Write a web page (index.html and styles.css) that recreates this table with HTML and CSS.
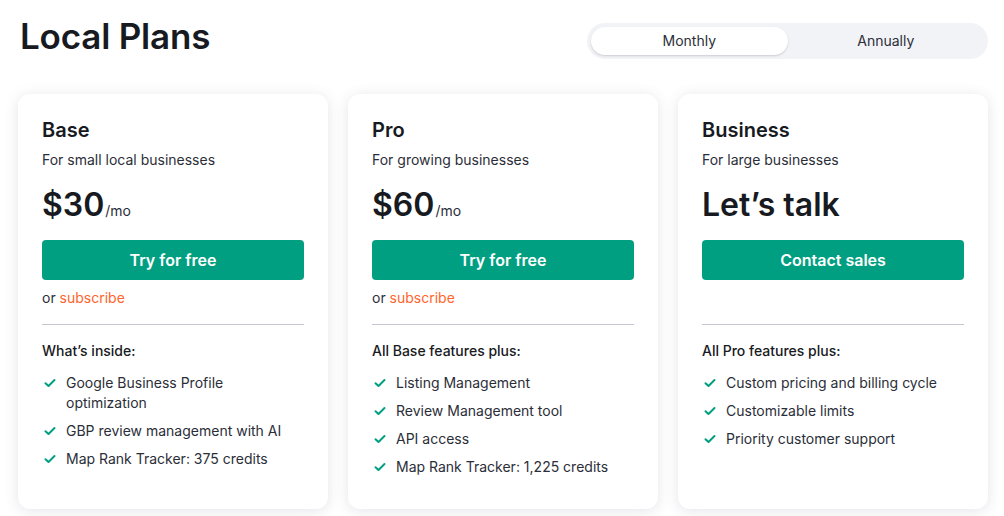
FILE: index.html
```html
<!DOCTYPE html>
<html lang="en">
<head>
<meta charset="utf-8">
<title>Local Plans</title>
<link rel="stylesheet" href="styles.css">
</head>
<body>
<div class="page">
  <header class="top">
    <h1 class="title">Local Plans</h1>
    <div class="toggle">
      <span class="toggle-opt active">Monthly</span>
      <span class="toggle-opt">Annually</span>
    </div>
  </header>
  <main class="cards">
    <section class="card">
      <h2 class="plan">Base</h2>
      <p class="desc">For small local businesses</p>
      <div class="price"><span class="amount">$30</span><span class="per">/mo</span></div>
      <a class="btn" href="#">Try for free</a>
      <p class="alt">or <a href="#" class="sub">subscribe</a></p>
      <hr class="sep">
      <p class="inc">What’s inside:</p>
      <ul class="feats">
        <li><svg class="chk" viewBox="0 0 12 10"><path d="M1.5 5.2 4.5 8 10.5 2" /></svg><span>Google Business Profile optimization</span></li>
        <li><svg class="chk" viewBox="0 0 12 10"><path d="M1.5 5.2 4.5 8 10.5 2" /></svg><span>GBP review management with AI</span></li>
        <li><svg class="chk" viewBox="0 0 12 10"><path d="M1.5 5.2 4.5 8 10.5 2" /></svg><span>Map Rank Tracker: 375 credits</span></li>
      </ul>
    </section>
    <section class="card">
      <h2 class="plan">Pro</h2>
      <p class="desc">For growing businesses</p>
      <div class="price"><span class="amount">$60</span><span class="per">/mo</span></div>
      <a class="btn" href="#">Try for free</a>
      <p class="alt">or <a href="#" class="sub">subscribe</a></p>
      <hr class="sep">
      <p class="inc">All Base features plus:</p>
      <ul class="feats">
        <li><svg class="chk" viewBox="0 0 12 10"><path d="M1.5 5.2 4.5 8 10.5 2" /></svg><span>Listing Management</span></li>
        <li><svg class="chk" viewBox="0 0 12 10"><path d="M1.5 5.2 4.5 8 10.5 2" /></svg><span>Review Management tool</span></li>
        <li><svg class="chk" viewBox="0 0 12 10"><path d="M1.5 5.2 4.5 8 10.5 2" /></svg><span>API access</span></li>
        <li><svg class="chk" viewBox="0 0 12 10"><path d="M1.5 5.2 4.5 8 10.5 2" /></svg><span>Map Rank Tracker: 1,225 credits</span></li>
      </ul>
    </section>
    <section class="card">
      <h2 class="plan">Business</h2>
      <p class="desc">For large businesses</p>
      <div class="price"><span class="amount">Let’s talk</span></div>
      <a class="btn" href="#">Contact sales</a>
      <p class="alt"></p>
      <hr class="sep">
      <p class="inc">All Pro features plus:</p>
      <ul class="feats">
        <li><svg class="chk" viewBox="0 0 12 10"><path d="M1.5 5.2 4.5 8 10.5 2" /></svg><span>Custom pricing and billing cycle</span></li>
        <li><svg class="chk" viewBox="0 0 12 10"><path d="M1.5 5.2 4.5 8 10.5 2" /></svg><span>Customizable limits</span></li>
        <li><svg class="chk" viewBox="0 0 12 10"><path d="M1.5 5.2 4.5 8 10.5 2" /></svg><span>Priority customer support</span></li>
      </ul>
    </section>
  </main>
</div>
</body>
</html>
```
FILE: styles.css
```css
* { box-sizing: border-box; }
html, body { margin: 0; padding: 0; background: #ffffff; }
body {
  font-family: Inter, "Noto Sans", "Liberation Sans", sans-serif;
  color: #191b23;
  width: 1004px;
  height: 516px;
  overflow: hidden;
}
.page { padding: 0 16px 0 18px; }
.top {
  display: flex;
  justify-content: space-between;
  align-items: flex-start;
  height: 94px;
}
.title {
  margin: 14px 0 0 2px;
  font-size: 35px;
  line-height: 44px;
  font-weight: 600;
  letter-spacing: -0.2px;
  color: #181a22;
}
.toggle {
  margin-top: 23px;
  width: 401px;
  height: 36px;
  border-radius: 18px;
  background: #f2f3f7;
  padding: 4px;
  display: flex;
}
.toggle-opt {
  flex: 1;
  display: flex;
  align-items: center;
  justify-content: center;
  font-size: 14px;
  line-height: 20px;
  padding-bottom: 1px;
  color: #2b2e38;
  border-radius: 14px;
}
.toggle-opt.active {
  background: #ffffff;
  box-shadow: 0 1px 2px rgba(25, 27, 35, 0.18);
}
.cards {
  display: grid;
  grid-template-columns: repeat(3, 310px);
  gap: 20px;
}
.card {
  height: 415px;
  background: #ffffff;
  border-radius: 12px;
  box-shadow: 0 2px 14px rgba(90, 95, 120, 0.16);
  padding: 24px 24px 0;
  display: flex;
  flex-direction: column;
}
.plan {
  margin: 0;
  font-size: 20px;
  line-height: 24px;
  font-weight: 600;
  color: #181a22;
}
.desc {
  margin: 8px 0 0;
  font-size: 14px;
  line-height: 20px;
  color: #2b2e38;
}
.price {
  margin-top: 15px;
  display: flex;
  align-items: baseline;
  height: 40px;
}
.amount {
  font-size: 32px;
  line-height: 40px;
  font-weight: 600;
  color: #181a22;
}
.per {
  font-size: 14px;
  color: #2b2e38;
  margin-left: 1px;
}
.btn {
  margin-top: 15px;
  height: 40px;
  border-radius: 4px;
  background: #009f81;
  color: #ffffff;
  font-size: 16px;
  font-weight: 600;
  text-decoration: none;
  display: flex;
  align-items: center;
  justify-content: center;
}
.alt {
  margin: 8px 0 0;
  height: 20px;
  font-size: 14px;
  line-height: 20px;
  color: #2b2e38;
}
.sub { color: #ff642d; text-decoration: none; }
.sep {
  margin: 16px 0 0;
  border: 0;
  border-top: 1px solid #c4c7cf;
}
.inc {
  margin: 16px 0 0;
  font-size: 14px;
  line-height: 20px;
  font-weight: 500;
  color: #181a22;
}
.feats {
  list-style: none;
  margin: 12px 0 0;
  padding: 0;
  display: flex;
  flex-direction: column;
  gap: 8px;
}
.feats li {
  display: flex;
  font-size: 14px;
  line-height: 20px;
  color: #2b2e38;
}
.chk {
  flex: none;
  width: 12px;
  height: 10px;
  margin: 5px 10px 0 2px;
  fill: none;
  stroke: #009f81;
  stroke-width: 2;
  stroke-linecap: round;
  stroke-linejoin: round;
}
```
